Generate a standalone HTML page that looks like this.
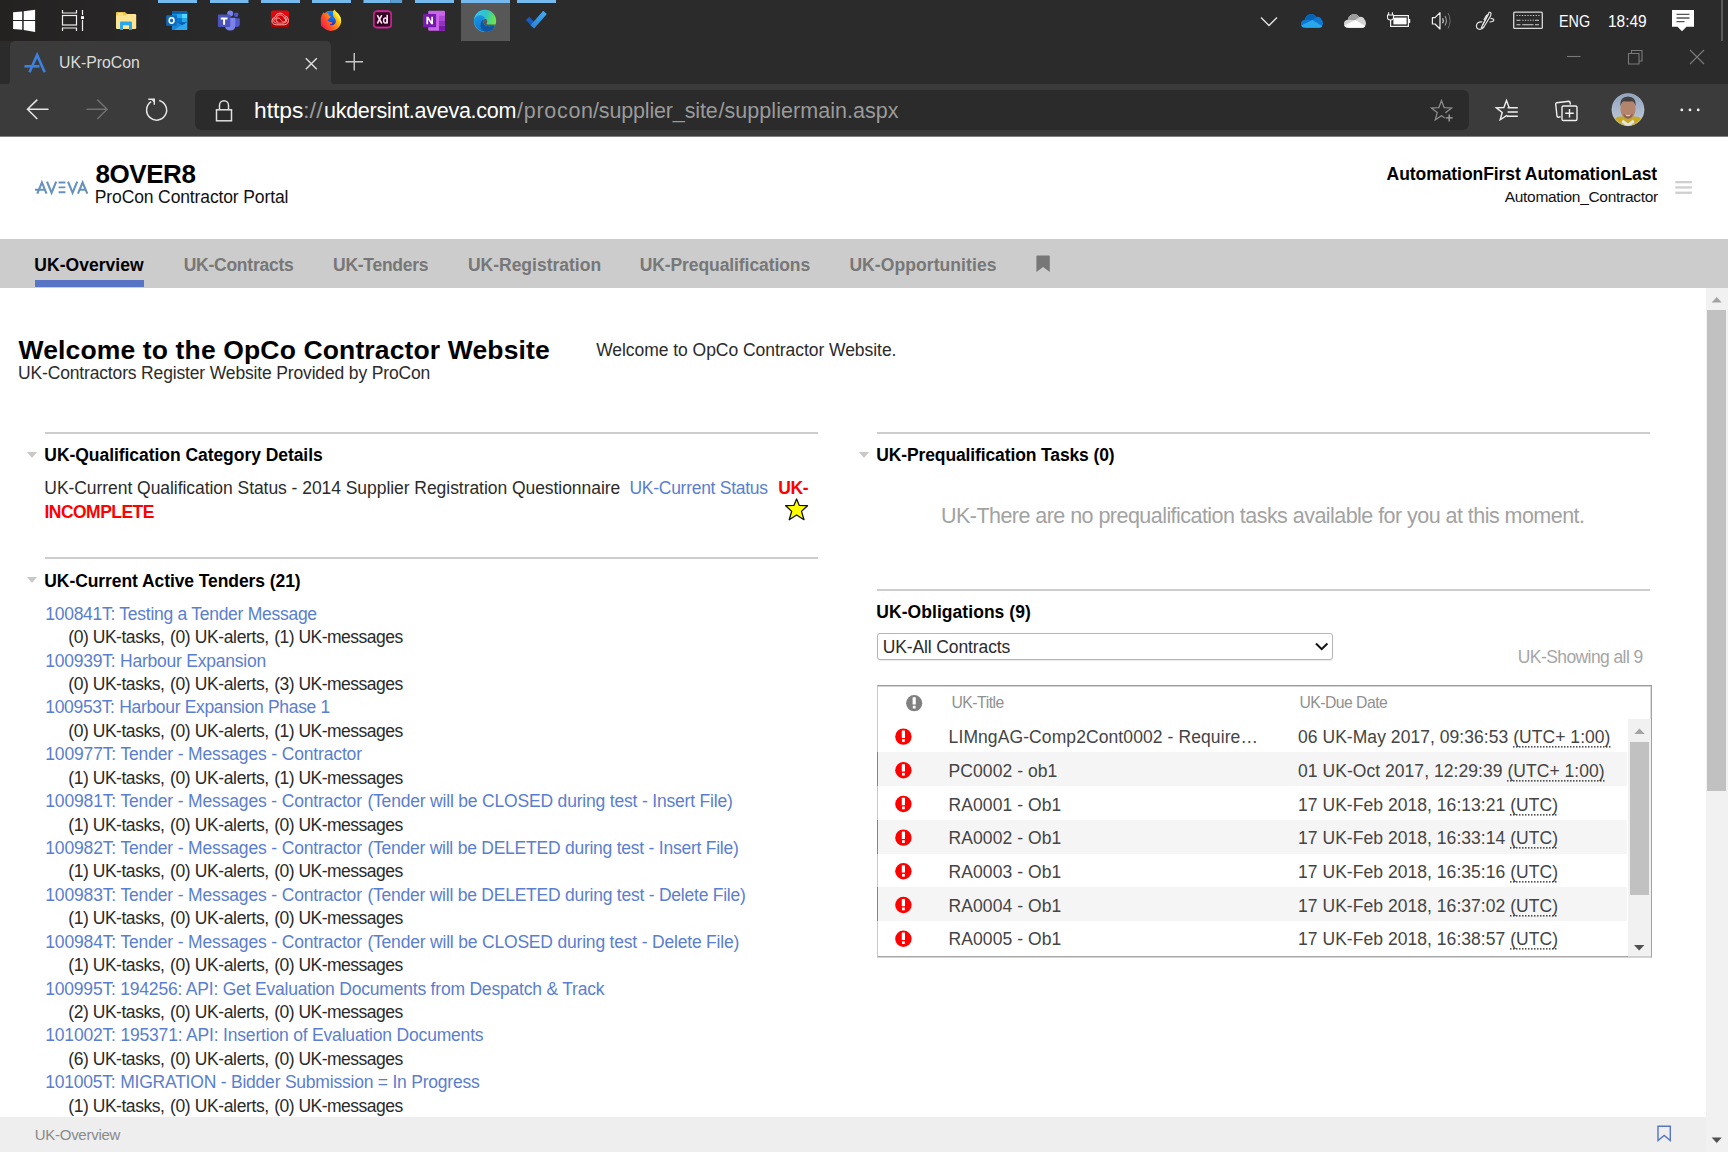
<!DOCTYPE html>
<html>
<head>
<meta charset="utf-8">
<title>UK-ProCon</title>
<style>
*{box-sizing:border-box;margin:0;padding:0}
html,body{width:1728px;height:1152px;overflow:hidden;background:#fff}
body{font-family:"Liberation Sans",sans-serif;position:relative;color:#000;font-size:16px;line-height:1}
.a{position:absolute;display:block}
.t{position:absolute;white-space:pre;line-height:1;font-family:"Liberation Sans",sans-serif}
svg{position:absolute;display:block;overflow:visible}
.ab{}
/* chrome */
#taskbar{left:0;top:0;width:1728px;height:41px;background:linear-gradient(90deg,#242121 0,#292828 160px,#2b2b2b 400px)}
#tabstrip{left:0;top:41px;width:1728px;height:44px;background:#2b2b2b}
#tab{left:10px;top:41px;width:321px;height:44px;background:#3b3b3b;border-radius:5px 5px 0 0}
#addr{left:0;top:84px;width:1728px;height:52px;background:#3b3b3b}
#url{left:195px;top:90px;width:1274px;height:40px;background:#2b2b2b;border-radius:6px}
#chromeline{left:0;top:136px;width:1728px;height:1px;background:#808080}
.ind{position:absolute;top:0;height:3px;background:#76b9ed}
/* page */
#nav{left:0;top:239px;width:1728px;height:49px;background:#cccccc}
#navbar{left:35px;top:280px;width:109px;height:7px;background:#5775c4}
#footer{left:0;top:1117px;width:1706px;height:35px;background:#eeeeee}
#vscroll{left:1706px;top:288px;width:22px;height:864px;background:#f1f1f1}
#vthumb{left:1707px;top:310px;width:19px;height:481px;background:#c1c1c1}
.hr{position:absolute;height:2px;background:#cdcdcd}
.tri{position:absolute;width:0;height:0;border-left:5.5px solid transparent;border-right:5.5px solid transparent;border-top:6px solid #c8c8c8}
#sel{left:877px;top:633px;width:456px;height:27px;border:1px solid #b5b5b5;border-radius:3px;background:#fff;box-shadow:0 1px 1px rgba(0,0,0,.08)}
#tbl{left:877px;top:685px;width:775px;height:273px;background:#fff;border-top:1px solid #9c9c9c;border-left:1px solid #c8c8c8;border-right:1px solid #a2a2a2;border-bottom:1px solid #d4d4d4;box-shadow:inset 0 1px 0 #d2d2d2,inset -1px 0 0 #dcdcdc,inset 0 -1px 0 #a8a8a8}
.alt{position:absolute;left:877px;width:750px;height:33.7px;background:#f5f5f5;border-left:1px solid #858585}
#iscroll{left:1628px;top:719px;width:23px;height:238px;background:#f1f1f1;border-bottom:1px solid #cfcfcf}
#ithumb{left:1630px;top:742px;width:19px;height:153px;background:#c1c1c1}
</style>
</head>
<body>
<!-- ======== TASKBAR / BROWSER CHROME ======== -->
<div class="a" id="taskbar"></div>
<div class="a" id="tabstrip"></div>
<div class="a" id="tab"></div>
<div class="a" id="addr"></div>
<div class="a" id="url"></div>
<div class="a" id="chromeline"></div>
<svg class="a" style="left:0;top:0" width="1728" height="137" viewBox="0 0 1728 137">
<defs>
<linearGradient id="gcc" x1="0" y1="0" x2="0" y2="1"><stop offset="0" stop-color="#f0070e"/><stop offset="1" stop-color="#a80000"/></linearGradient>
<linearGradient id="gff" gradientUnits="userSpaceOnUse" x1="341" y1="14" x2="321" y2="27"><stop offset="0" stop-color="#fff36a"/><stop offset="0.15" stop-color="#ffee3a"/><stop offset="0.27" stop-color="#ffbd0a"/><stop offset="0.45" stop-color="#ff8a16"/><stop offset="0.7" stop-color="#ff4a2a"/><stop offset="0.88" stop-color="#ff2a3a"/><stop offset="1" stop-color="#d3108c"/></linearGradient>
<linearGradient id="gffb" x1="0.5" y1="0" x2="0.45" y2="1"><stop offset="0" stop-color="#0a84ff"/><stop offset="0.55" stop-color="#0a6cf0"/><stop offset="1" stop-color="#3a22b0"/></linearGradient>
<linearGradient id="gedge1" x1="0" y1="0.25" x2="1" y2="0.55"><stop offset="0" stop-color="#38c2fa"/><stop offset="0.5" stop-color="#2fc4c4"/><stop offset="0.85" stop-color="#62e05a"/><stop offset="1" stop-color="#6ee84a"/></linearGradient>
<linearGradient id="gedge2" x1="0.2" y1="0" x2="0.5" y2="1"><stop offset="0" stop-color="#1a96e2"/><stop offset="1" stop-color="#0a72d2"/></linearGradient>
<linearGradient id="gtodo" x1="0" y1="1" x2="1" y2="0"><stop offset="0" stop-color="#2a86d8"/><stop offset="1" stop-color="#43a8ef"/></linearGradient>
<clipPath id="cav"><circle cx="1628" cy="109.6" r="16.2"/></clipPath>
<linearGradient id="gsky" x1="0" y1="0" x2="0" y2="1"><stop offset="0" stop-color="#8fa3bf"/><stop offset="1" stop-color="#c4cdd9"/></linearGradient>
</defs>
<!-- indicator bars -->
<g fill="#76b9ed">
<rect x="158" y="0" width="39" height="3"/><rect x="210" y="0" width="38.5" height="3"/><rect x="261" y="0" width="39" height="3"/>
<rect x="312" y="0" width="39" height="3"/><rect x="363.5" y="0" width="27" height="3"/><rect x="390.5" y="0" width="11.6" height="3" fill="#5a9bd0"/>
<rect x="415" y="0" width="39" height="3"/><rect x="461" y="0" width="49" height="3"/><rect x="517" y="0" width="39" height="3"/>
</g>
<rect x="461" y="3" width="49" height="38" fill="#575757"/>
<!-- windows logo -->
<g fill="#fff">
<polygon points="13.1,12.3 22.2,11.5 22.2,20 13.1,20"/><polygon points="23.7,11.3 35.1,9.7 35.1,20 23.7,20"/>
<polygon points="13.1,21 22.2,21 22.2,29.7 13.1,28.9"/><polygon points="23.7,21 35.1,21 35.1,32 23.7,30.1"/>
</g>
<!-- task view -->
<g fill="none" stroke="#f0f0f0" stroke-width="1.2">
<rect x="62.5" y="15.5" width="14" height="9.5"/>
<path d="M62.5 10v3h14v-3M62.5 31v-3h14v3M82.5 10v5M82.5 20v11"/>
</g>
<rect x="81" y="16.2" width="3" height="2.8" fill="#fff"/>
<!-- folder -->
<path d="M116 13.3q0-1 1-1h7.3q1 0 1.7 1l1 0.8h8.2q1 0 1 1v13q0 1-1 1h-18.2q-1 0-1-1z" fill="#ffe591"/>
<path d="M116 13.3q0-1 1-1h7.3q1 0 1.7 1l0.7 0.8-1.2 1.2h-9.5z" fill="#f5c638"/>
<rect x="118" y="13.3" width="5" height="1.3" rx="0.6" fill="#fff7d6"/>
<path d="M120 30v-7.4q0-1 1-1h10q1 0 1 1v7.4h-3v-4.7h-6v4.7z" fill="#29a9ea"/>
<!-- outlook -->
<rect x="172" y="11.3" width="15.2" height="18.7" rx="1" fill="#1490df"/>
<rect x="172" y="11.3" width="15.2" height="2.6" fill="#0a5ead"/>
<rect x="177" y="13.9" width="5.1" height="4.2" fill="#28a8ea"/><rect x="182.1" y="13.9" width="5.1" height="4.2" fill="#50d9ff"/>
<rect x="177" y="18.1" width="5.1" height="4.2" fill="#0078d4"/><rect x="182.1" y="18.1" width="5.1" height="4.2" fill="#28a8ea"/>
<path d="M172 22l15.2 8h-15.2z" fill="#1a86d9"/><path d="M187.2 21.5l-13 8.5h13z" fill="#32a9ee"/>
<path d="M177 22.3h10.2l-5.1 3z" fill="#0a5ead"/>
<rect x="166.2" y="15.3" width="10.7" height="10.4" rx="0.8" fill="#0f6cbd"/>
<ellipse cx="171.6" cy="20.5" rx="2.4" ry="2.7" fill="none" stroke="#fff" stroke-width="1.5"/>
<!-- teams -->
<circle cx="236.2" cy="14.8" r="2.3" fill="#5059c9"/>
<path d="M233 18.2h6.2q0.6 0 0.6 0.6v5.2q0 3-3.2 3t-3.6-3z" fill="#5059c9"/>
<circle cx="230.2" cy="13.5" r="3" fill="#7b83eb"/>
<path d="M225.5 17.8h9.2q0.6 0 0.6 0.6v7.2q0 5-5 5t-5.4-5z" fill="#7b83eb"/>
<rect x="217.9" y="14.5" width="12.4" height="12.4" rx="0.8" fill="#4b53bc"/>
<path d="M220.7 17.6h6.8v1.9h-2.4v5.3h-2v-5.3h-2.4z" fill="#fff"/>
<!-- creative cloud -->
<rect x="270.900" y="10.600" width="18.100" height="16.900" rx="2.600" fill="url(#gcc)"/>
<g fill="none" stroke="#ffc4c4" stroke-width="0.900">
<path d="M276.200 24.800q-4.200-.3-4.200-3.900 0-3 3-3.800 1-4 5.200-4 3 0 4.400 2.600 3.800 .600 3.800 4.500 0 4.200-4.200 4.600z"/>
<path d="M276.600 23.100q-2.900-.2-2.900-2.500 0-2.200 2.600-2.700 .800-3.100 3.900-3.100 2.300 0 3.300 2.100 3.200 .300 3.200 3.100 0 2.900-3 3.100z" opacity=".85"/>
<path d="M278.200 22q-2.200 0-2.200-2t2.200-2q1.200 0 2 1l1.600 2q.9 1 1.900 1 2 0 2-2t-2-2" opacity=".9"/>
</g>
<!-- firefox -->
<circle cx="331" cy="20.900" r="10.100" fill="url(#gff)"/>
<circle cx="331.200" cy="18.200" r="7.300" fill="url(#gffb)"/>
<path d="M333 11.600L334.400 9.600C335.500 11.800 337.800 12.600 339.300 15.200C341 18 341.500 20.500 341 23L336 28L332 25.600C334 25.200 336 23.500 335.900 21C335.800 18.500 333.300 17.500 333 15Z" fill="url(#gff)"/>
<path d="M323.600 12.200C324.300 13 325 13.800 325.600 13.700C326.500 13.400 327.500 13.200 328.600 13.400C328.400 14.500 328.800 15.300 329.400 15.700L330.800 16.600C330.300 17.600 329.600 18.200 328.800 18.800C328.200 19.600 327.800 20.200 327.400 20.600C328.800 21.800 330.800 22.300 332.600 22.600C332 23.800 330.800 24.400 329.400 24.600C330.500 25.300 331.500 25.500 332.500 25.500L331 31L321 26L320.800 20C320.800 17 321.800 14.300 323.600 12.200Z" fill="url(#gff)"/>
<!-- Xd -->
<rect x="373.900" y="11.400" width="17.200" height="15.900" rx="2.600" fill="#2e001e" stroke="#c4208f" stroke-width="1.800"/>
<path d="M376.500 10.900h12M376.500 27.800h12" stroke="#ee2cb4" stroke-width="0.900" fill="none"/>
<g fill="none" stroke="#ffdcf3" stroke-width="1.600">
<path d="M377.300 15.200l4.500 8.300M381.800 15.200l-4.500 8.300"/>
<path d="M387.200 14.800v8.700"/>
<ellipse cx="385.400" cy="20.500" rx="1.800" ry="2.500" stroke-width="1.400"/>
</g>
<!-- onenote -->
<rect x="428.200" y="10.800" width="16.800" height="19.900" rx="1" fill="#ca64ea"/>
<rect x="439" y="15.700" width="6" height="5" fill="#ae4bd5"/><rect x="439" y="20.700" width="6" height="5" fill="#9332bf"/><path d="M439 25.700h6v4q0 1-1 1h-5z" fill="#7719aa"/>
<rect x="423" y="14" width="13.100" height="13.200" rx="0.800" fill="#7719aa"/>
<path d="M426.400 24.200v-7.400h1.900l3 4.600v-4.600h1.700v7.400h-1.800l-3.100-4.700v4.700z" fill="#fff"/>
<!-- edge -->
<circle cx="485" cy="20.900" r="11.100" fill="url(#gedge1)"/>
<path d="M474.050 19.500C475.300 16.200 478.300 14.900 481 15.200C483 15.500 484.500 17 485 18.600C483.600 18.800 483.100 20 483.200 21.500C483.200 23 483.800 24.200 485.200 25.200C487.500 26.600 491 26.600 495 25.600A11.100 11.100 0 0 1 474.050 19.500Z" fill="url(#gedge2)"/>
<path d="M483.500 19.300C481.500 20.500 480.200 23 480.500 26C481 29.500 483.500 31.800 487 31.900C491 31.500 494 29 495 25.600C491 26.600 487.500 26.600 485.200 25.200C483.800 24.200 483.200 23 483.200 21.500C483.100 20.500 483.200 19.800 483.500 19.300Z" fill="#0e56a4"/>
<ellipse cx="485.150" cy="21.600" rx="1.950" ry="2.750" fill="#575757"/>
<path d="M484.300 23.500L488 24.400L495.700 24.400L495.800 25.300L495 25.600C491 26.600 487.500 26.600 485.200 25.200Z" fill="#575757"/>
<!-- todo -->
<path d="M527.600 18.400l6.400 6.700" stroke="#195abd" stroke-width="4.800" fill="none"/>
<path d="M532.300 26.800l12.700-14.500" stroke="url(#gtodo)" stroke-width="4.800" fill="none"/>
<!-- tray chevron -->
<path d="M1261 17.500l8 8 8-8" fill="none" stroke="#e6e6e6" stroke-width="1.300"/>
<!-- onedrive blue -->
<path d="M1305.500 27.700q-4.500 0-4.500-4 0-3.500 3.800-4 .7-4.200 5-5.500 4-1 6.700 2.700 4-.5 5.200 3 .8 0 1 1.800 1.200 2.500-1 5-1 1-2.500 1z" fill="#0f78d4"/>
<path d="M1304.800 19.700q.7-4.200 5-5.500 4-1 6.700 2.700l-4.500 3.300z" fill="#0364b8"/>
<path d="M1301.300 25.500l11-5.500 10 6q-.8 1.700-2.800 1.700h-14q-3.500 0-4.200-2.200z" fill="#28a8ea"/>
<!-- onedrive gray -->
<path d="M1348.500 27.700q-4.500 0-4.500-4 0-3.500 3.800-4 .7-4.200 5-5.500 4-1 6.700 2.700 4-.5 5.200 3 .8 0 1 1.800 1.200 2.500-1 5-1 1-2.500 1z" fill="#d4d4d4"/>
<path d="M1347.800 19.700q.7-4.200 5-5.500 4-1 6.700 2.700l-4.500 3.300z" fill="#9c9c9c"/>
<path d="M1344.300 25.500l11-5.500 10 6q-.8 1.700-2.800 1.700h-14q-3.500 0-4.200-2.200z" fill="#fbfbfb"/>
<!-- battery -->
<rect x="1390.600" y="15.600" width="17.800" height="10.800" fill="none" stroke="#f2f2f2" stroke-width="1.200"/>
<rect x="1393.400" y="17.600" width="13.200" height="6.800" fill="#fff"/>
<rect x="1409" y="19" width="1.200" height="4" fill="#f2f2f2"/>
<path d="M1388.600 12.300v2.700M1392.400 12.300v2.700M1387.500 15h6v2.500q0 2.500-3 2.500t-3-2.500zM1390.500 20v2.200" fill="#2b2b2b" stroke="#f2f2f2" stroke-width="1.100"/>
<!-- speaker -->
<path d="M1432.400 17.700h2.600l5-5v16.300l-5-5h-2.600z" fill="none" stroke="#f2f2f2" stroke-width="1.200" stroke-linejoin="round"/>
<path d="M1442.600 18.300q1.400 2.500 0 5" fill="none" stroke="#d8d8d8" stroke-width="1.200"/>
<path d="M1445 16q2.700 4.800 0 9.600" fill="none" stroke="#a0a0a0" stroke-width="1.100"/>
<path d="M1448 13q4.200 7.800 0 15.600" fill="none" stroke="#6c6c6c" stroke-width="1"/>
<!-- pen -->
<g fill="none" stroke="#e4e4e4" stroke-width="1.200">
<path d="M1489.200 12.300q1.600-.4 1.900 1.500l-.6 2.200-6.800 11.200q-1.500 1.600-2.300.2z"/>
<path d="M1486.800 14.800l-3 5.200M1488.500 14l-5.800 11"/>
<path d="M1482.300 21.800q-5.300-.3-5.900 3.800-.1 3.600 3.500 3.700 2.800-.3 4-2.500M1489.500 22q4.500-.3 4.300-2.200-.5-1.500-3.300-1.500"/>
</g>
<!-- keyboard -->
<rect x="1513.700" y="12.200" width="28.600" height="16.200" rx="1" fill="none" stroke="#dadada" stroke-width="1.300"/>
<g stroke="#d4d4d4" stroke-width="1.100" fill="none">
<path d="M1516.500 15.500h23" stroke-dasharray="1.200 1.530"/>
<path d="M1516.500 20.300h4M1535 20.300h4M1516.500 24.700h4M1522.200 24.700h11.300M1535 24.700h4"/>
<path d="M1522.300 20.300h11.500" stroke-dasharray="1.200 1.400"/>
</g>
<!-- notification -->
<path d="M1672 10h22v16.700h-7.500l-4.500 4.600-4.500-4.600h-5.500z" fill="#fff"/>
<path d="M1676.500 14.300h13M1676.500 18h13M1676.500 21.700h8" stroke="#555" stroke-width="1.300"/>
<rect x="1721.500" y="0" width="1" height="41" fill="#8a8a8a"/>
<!-- window controls -->
<g stroke="#7a7a7a" stroke-width="1.100" fill="none">
<path d="M1567 56.500h13.500"/>
<path d="M1628.500 53.500h10.500v10.500h-10.500zM1631.500 53.500v-3h10.500v10.500h-3"/>
<path d="M1690 50l14 14M1704 50l-14 14"/>
</g>
<path d="M5.500 84.500Q10 84.500 10 80V84.500ZM331 80Q331 84.500 335.500 84.500H331Z" fill="#3b3b3b"/>
<!-- tab favicon -->
<g fill="none" stroke="#3b82e0" stroke-width="2.600">
<path d="M29.500 72.300l7.600-17.400 7.600 17.400"/><path d="M24.500 66.300h15"/>
</g>
<!-- tab close / new tab -->
<path d="M305.800 58.300l11 11M316.800 58.300l-11 11" stroke="#e0e0e0" stroke-width="1.400" fill="none"/>
<path d="M345.500 61.800h17.500M354.250 53v17.500" stroke="#c8c8c8" stroke-width="1.400" fill="none"/>
<!-- back / fwd / reload -->
<g fill="none" stroke="#e6e6e6" stroke-width="1.500">
<path d="M48.500 109.300h-21M37.300 99.600l-9.800 9.700 9.800 9.700"/>
</g>
<g fill="none" stroke="#707070" stroke-width="1.500">
<path d="M86.500 109.300h20.500M97.300 99.600l9.800 9.700-9.800 9.700"/>
</g>
<g fill="none" stroke="#e6e6e6" stroke-width="1.500">
<path d="M159.200 100.450a10 10 0 1 1-8 1.250"/>
<path d="M148.300 99.300h6v5.500" stroke-width="1.400"/>
<path d="M150.800 99.300h3.500v3.500z" fill="#e6e6e6" stroke="none"/>
</g>
<!-- lock -->
<g fill="none" stroke="#e0e0e0" stroke-width="1.500">
<rect x="216.500" y="109.800" width="15" height="11"/>
<path d="M219.500 109.800v-4.500a4.500 4.500 0 0 1 9 0v4.500"/>
</g>
<!-- fav star+ -->
<path d="M1441.50 100.60L1444.15 107.56L1451.58 107.92L1445.78 112.59L1447.73 119.78L1441.50 115.70L1435.27 119.78L1437.22 112.59L1431.42 107.92L1438.85 107.56Z" fill="none" stroke="#8f8f8f" stroke-width="1.250"/>
<rect x="1444.600" y="113.200" width="9" height="9" fill="#2b2b2b"/>
<path d="M1449.200 114.400v7M1445.700 117.900h7" stroke="#a8a8a8" stroke-width="1.300" fill="none"/>
<!-- favourites list -->
<g fill="none" stroke="#f0f0f0" stroke-width="1.400">
<path d="M1509.15 107.46L1506.50 100.40L1503.85 107.46L1496.32 107.79L1502.22 112.49L1500.21 119.76L1506.50 115.60l1.600 1"/>
<path d="M1507.600 107.800h10.200M1507.600 112h10.200M1507.600 116.200h10.200"/>
</g>
<!-- collections -->
<g fill="none" stroke="#f0f0f0" stroke-width="1.400">
<path d="M1560.600 116.800l-2.400.4q-1 0-1.200-1l-1.300-12.200q0-1 1-1.200l12.200-1.500q1 0 1.200 1l.3 2.300"/>
<rect x="1562" y="106" width="15" height="14.500" rx="1.300"/>
<path d="M1569.500 109v8.500M1565.200 113.250h8.600"/>
</g>
<!-- avatar -->
<g clip-path="url(#cav)">
<rect x="1611" y="93" width="34" height="34" fill="url(#gsky)"/>
<path d="M1611 127v-5q4-5 9-5.500l16 0q5 .5 9 5.500v5z" fill="#c7aa22"/>
<path d="M1623 119.500l5 4 5-4 1.500 3-6.500 4.500-6.500-4.500z" fill="#e4e4e4"/>
<ellipse cx="1628" cy="109" rx="7.600" ry="10.200" fill="#b4856c"/>
<path d="M1620.300 106.500q-.8-9.800 7.700-10 8.500.2 7.700 10-1.200-4.600-3.500-5.300-4.200.8-8.400 0-2.300.7-3.500 5.300z" fill="#45413e"/>
<path d="M1623 113.500q5 3.500 10 0-1 5-5 5.200-4-.2-5-5.200z" fill="#8f6350"/>
<path d="M1625 114.500q3 1.600 6 0-1 1.800-3 1.800t-3-1.800z" fill="#efe6df"/>
</g>
<circle cx="1628" cy="109.600" r="16.200" fill="none" stroke="#d8dde6" stroke-width="0.600" opacity=".6"/>
<!-- dots -->
<g fill="#f0f0f0"><circle cx="1681.800" cy="109.900" r="1.400"/><circle cx="1690" cy="109.900" r="1.400"/><circle cx="1698.200" cy="109.900" r="1.400"/></g>
</svg>

<div class="t" style="left:58.57px;top:54px;font-size:17px;color:#dcdcdc;transform:scaleX(0.9302);transform-origin:0 0;">UK-ProCon</div>
<div class="t" style="left:253.94px;top:101px;font-size:21.5px;color:#ffffff;transform:scaleX(1.0588);transform-origin:0 0;">https</div>
<div class="t" style="left:302.64px;top:101px;font-size:21.5px;color:#9a9a9a;transform:scaleX(1.1064);transform-origin:0 0;">://</div>
<div class="t" style="left:324.00px;top:101px;font-size:21.5px;color:#ffffff;letter-spacing:-0.265px;">ukdersint.aveva.com</div>
<div class="t" style="left:517.00px;top:101px;font-size:21.5px;color:#9a9a9a;letter-spacing:0.724px;">/procon</div>
<div class="t" style="left:593.00px;top:101px;font-size:21.5px;color:#9a9a9a;letter-spacing:-0.156px;">/supplier_site</div>
<div class="t" style="left:718.50px;top:101px;font-size:21.5px;color:#9a9a9a;letter-spacing:0.047px;">/suppliermain.aspx</div>
<div class="t" style="left:1558.50px;top:14px;font-size:16px;color:#ffffff;transform:scaleX(0.8969);transform-origin:0 0;">ENG</div>
<div class="t" style="left:1607.63px;top:14px;font-size:16px;color:#ffffff;transform:scaleX(0.9657);transform-origin:0 0;">18:49</div>

<!-- ======== PAGE HEADER ======== -->
<!--{{LOGO}}-->
<div class="a" id="nav"></div>
<div class="a" id="navbar"></div>

<!-- ======== CONTENT ======== -->
<div class="hr" style="left:45px;top:432px;width:773px"></div>
<div class="hr" style="left:45px;top:557px;width:773px"></div>
<div class="hr" style="left:877px;top:432px;width:773px"></div>
<div class="hr" style="left:877px;top:589px;width:773px"></div>
<div class="tri" style="left:27px;top:451.5px"></div>
<div class="tri" style="left:27px;top:577px"></div>
<div class="tri" style="left:859px;top:451.5px"></div>
<div class="a" id="sel"></div>
<div class="a" id="tbl"></div>
<div class="alt" style="top:752px;height:34px"></div>
<div class="alt" style="top:820px;height:34px"></div>
<div class="alt" style="top:887px;height:34px"></div>
<div class="a" id="iscroll"></div>
<div class="a" id="ithumb"></div>
<div class="t" style="left:95.40px;top:161px;font-size:26px;color:#000;font-weight:bold;letter-spacing:-0.429px;">8OVER8</div>
<div class="t" style="left:94.80px;top:189px;font-size:17.5px;color:#111;letter-spacing:-0.125px;">ProCon Contractor Portal</div>
<div class="t" style="left:1386.60px;top:166px;font-size:17.5px;color:#000;font-weight:bold;letter-spacing:-0.067px;">AutomationFirst AutomationLast</div>
<div class="t" style="left:1504.70px;top:189px;font-size:15.5px;color:#111;letter-spacing:-0.296px;">Automation_Contractor</div>
<div class="t" style="left:34.30px;top:257px;font-size:17.5px;color:#000;font-weight:bold;letter-spacing:0.038px;">UK-Overview</div>
<div class="t" style="left:183.70px;top:257px;font-size:17.5px;color:#777;font-weight:bold;letter-spacing:-0.250px;">UK-Contracts</div>
<div class="t" style="left:333.00px;top:257px;font-size:17.5px;color:#777;font-weight:bold;letter-spacing:-0.261px;">UK-Tenders</div>
<div class="t" style="left:467.90px;top:257px;font-size:17.5px;color:#777;font-weight:bold;">UK-Registration</div>
<div class="t" style="left:639.70px;top:257px;font-size:17.5px;color:#777;font-weight:bold;letter-spacing:-0.088px;">UK-Prequalifications</div>
<div class="t" style="left:849.40px;top:257px;font-size:17.5px;color:#777;font-weight:bold;letter-spacing:0.081px;">UK-Opportunities</div>
<div class="t" style="left:18.50px;top:337px;font-size:26.5px;color:#000;font-weight:bold;letter-spacing:0.138px;">Welcome to the OpCo Contractor Website</div>
<div class="t" style="left:18.00px;top:365px;font-size:17.5px;color:#2b2b2b;letter-spacing:-0.155px;">UK-Contractors Register Website Provided by ProCon</div>
<div class="t" style="left:596.20px;top:342px;font-size:17.5px;color:#2b2b2b;letter-spacing:-0.046px;">Welcome to OpCo Contractor Website.</div>
<div class="t" style="left:44.30px;top:447px;font-size:17.5px;color:#000;font-weight:bold;letter-spacing:-0.051px;">UK-Qualification Category Details</div>
<div class="t" style="left:44.30px;top:480px;font-size:17.5px;color:#2b2b2b;letter-spacing:-0.052px;">UK-Current Qualification Status - 2014 Supplier Registration Questionnaire</div>
<div class="t" style="left:629.50px;top:480px;font-size:17.5px;color:#5a7ecf;letter-spacing:-0.279px;">UK-Current Status</div>
<div class="t" style="left:778.25px;top:480px;font-size:17.5px;color:#ff0000;font-weight:bold;letter-spacing:-0.388px;">UK-</div>
<div class="t" style="left:44.50px;top:504px;font-size:17.5px;color:#ff0000;font-weight:bold;letter-spacing:-0.534px;">INCOMPLETE</div>
<div class="t" style="left:44.30px;top:573px;font-size:17.5px;color:#000;font-weight:bold;letter-spacing:-0.079px;">UK-Current Active Tenders (21)</div>
<div class="t" style="left:876.30px;top:447px;font-size:17.5px;color:#000;font-weight:bold;letter-spacing:-0.126px;">UK-Prequalification Tasks (0)</div>
<div class="t" style="left:941.00px;top:506px;font-size:21.5px;color:#a2a2a2;letter-spacing:-0.541px;">UK-There are no prequalification tasks available for you at this moment.</div>
<div class="t" style="left:876.30px;top:604px;font-size:17.5px;color:#000;font-weight:bold;letter-spacing:0.054px;">UK-Obligations (9)</div>
<div class="t" style="left:882.75px;top:639px;font-size:17.5px;color:#2b2b2b;letter-spacing:-0.122px;">UK-All Contracts</div>
<div class="t" style="left:1517.75px;top:649px;font-size:17.5px;color:#a6a6a6;letter-spacing:-0.583px;">UK-Showing all 9</div>
<div class="t" style="left:951.50px;top:695px;font-size:15.75px;color:#909090;letter-spacing:-0.505px;">UK-Title</div>
<div class="t" style="left:1299.50px;top:695px;font-size:15.75px;color:#909090;letter-spacing:-0.540px;">UK-Due Date</div>
<div class="t" style="left:45.25px;top:606px;font-size:17.5px;color:#5a7ecf;letter-spacing:-0.271px;">100841T: Testing a Tender Message</div>
<div class="t" style="left:68.30px;top:629px;font-size:17.5px;color:#2a2a2a;letter-spacing:-0.461px;">(0) UK-tasks,</div>
<div class="t" style="left:170.00px;top:629px;font-size:17.5px;color:#2a2a2a;letter-spacing:-0.375px;">(0) UK-alerts,</div>
<div class="t" style="left:274.20px;top:629px;font-size:17.5px;color:#2a2a2a;letter-spacing:-0.507px;">(1) UK-messages</div>
<div class="t" style="left:45.25px;top:653px;font-size:17.5px;color:#5a7ecf;letter-spacing:-0.228px;">100939T: Harbour Expansion</div>
<div class="t" style="left:68.30px;top:676px;font-size:17.5px;color:#2a2a2a;letter-spacing:-0.461px;">(0) UK-tasks,</div>
<div class="t" style="left:170.00px;top:676px;font-size:17.5px;color:#2a2a2a;letter-spacing:-0.375px;">(0) UK-alerts,</div>
<div class="t" style="left:274.20px;top:676px;font-size:17.5px;color:#2a2a2a;letter-spacing:-0.507px;">(3) UK-messages</div>
<div class="t" style="left:45.25px;top:699px;font-size:17.5px;color:#5a7ecf;letter-spacing:-0.326px;">100953T: Harbour Expansion Phase 1</div>
<div class="t" style="left:68.30px;top:723px;font-size:17.5px;color:#2a2a2a;letter-spacing:-0.461px;">(0) UK-tasks,</div>
<div class="t" style="left:170.00px;top:723px;font-size:17.5px;color:#2a2a2a;letter-spacing:-0.375px;">(0) UK-alerts,</div>
<div class="t" style="left:274.20px;top:723px;font-size:17.5px;color:#2a2a2a;letter-spacing:-0.507px;">(1) UK-messages</div>
<div class="t" style="left:45.25px;top:746px;font-size:17.5px;color:#5a7ecf;letter-spacing:-0.154px;">100977T: Tender - Messages - Contractor</div>
<div class="t" style="left:68.30px;top:770px;font-size:17.5px;color:#2a2a2a;letter-spacing:-0.461px;">(1) UK-tasks,</div>
<div class="t" style="left:170.00px;top:770px;font-size:17.5px;color:#2a2a2a;letter-spacing:-0.375px;">(0) UK-alerts,</div>
<div class="t" style="left:274.20px;top:770px;font-size:17.5px;color:#2a2a2a;letter-spacing:-0.507px;">(1) UK-messages</div>
<div class="t" style="left:45.25px;top:793px;font-size:17.5px;color:#5a7ecf;letter-spacing:-0.154px;">100981T: Tender - Messages - Contractor</div>
<div class="t" style="left:367.40px;top:793px;font-size:17.5px;color:#5a7ecf;letter-spacing:-0.188px;">(Tender will be CLOSED during test - Insert File)</div>
<div class="t" style="left:68.30px;top:817px;font-size:17.5px;color:#2a2a2a;letter-spacing:-0.461px;">(1) UK-tasks,</div>
<div class="t" style="left:170.00px;top:817px;font-size:17.5px;color:#2a2a2a;letter-spacing:-0.375px;">(0) UK-alerts,</div>
<div class="t" style="left:274.20px;top:817px;font-size:17.5px;color:#2a2a2a;letter-spacing:-0.507px;">(0) UK-messages</div>
<div class="t" style="left:45.25px;top:840px;font-size:17.5px;color:#5a7ecf;letter-spacing:-0.154px;">100982T: Tender - Messages - Contractor</div>
<div class="t" style="left:367.40px;top:840px;font-size:17.5px;color:#5a7ecf;letter-spacing:-0.240px;">(Tender will be DELETED during test - Insert File)</div>
<div class="t" style="left:68.30px;top:863px;font-size:17.5px;color:#2a2a2a;letter-spacing:-0.461px;">(1) UK-tasks,</div>
<div class="t" style="left:170.00px;top:863px;font-size:17.5px;color:#2a2a2a;letter-spacing:-0.375px;">(0) UK-alerts,</div>
<div class="t" style="left:274.20px;top:863px;font-size:17.5px;color:#2a2a2a;letter-spacing:-0.507px;">(0) UK-messages</div>
<div class="t" style="left:45.25px;top:887px;font-size:17.5px;color:#5a7ecf;letter-spacing:-0.154px;">100983T: Tender - Messages - Contractor</div>
<div class="t" style="left:367.40px;top:887px;font-size:17.5px;color:#5a7ecf;letter-spacing:-0.236px;">(Tender will be DELETED during test - Delete File)</div>
<div class="t" style="left:68.30px;top:910px;font-size:17.5px;color:#2a2a2a;letter-spacing:-0.461px;">(1) UK-tasks,</div>
<div class="t" style="left:170.00px;top:910px;font-size:17.5px;color:#2a2a2a;letter-spacing:-0.375px;">(0) UK-alerts,</div>
<div class="t" style="left:274.20px;top:910px;font-size:17.5px;color:#2a2a2a;letter-spacing:-0.507px;">(0) UK-messages</div>
<div class="t" style="left:45.25px;top:934px;font-size:17.5px;color:#5a7ecf;letter-spacing:-0.154px;">100984T: Tender - Messages - Contractor</div>
<div class="t" style="left:367.40px;top:934px;font-size:17.5px;color:#5a7ecf;letter-spacing:-0.194px;">(Tender will be CLOSED during test - Delete File)</div>
<div class="t" style="left:68.30px;top:957px;font-size:17.5px;color:#2a2a2a;letter-spacing:-0.461px;">(1) UK-tasks,</div>
<div class="t" style="left:170.00px;top:957px;font-size:17.5px;color:#2a2a2a;letter-spacing:-0.375px;">(0) UK-alerts,</div>
<div class="t" style="left:274.20px;top:957px;font-size:17.5px;color:#2a2a2a;letter-spacing:-0.507px;">(0) UK-messages</div>
<div class="t" style="left:45.25px;top:981px;font-size:17.5px;color:#5a7ecf;letter-spacing:-0.205px;">100995T: 194256: API: Get Evaluation Documents from Despatch &amp; Track</div>
<div class="t" style="left:68.30px;top:1004px;font-size:17.5px;color:#2a2a2a;letter-spacing:-0.461px;">(2) UK-tasks,</div>
<div class="t" style="left:170.00px;top:1004px;font-size:17.5px;color:#2a2a2a;letter-spacing:-0.375px;">(0) UK-alerts,</div>
<div class="t" style="left:274.20px;top:1004px;font-size:17.5px;color:#2a2a2a;letter-spacing:-0.507px;">(0) UK-messages</div>
<div class="t" style="left:45.25px;top:1027px;font-size:17.5px;color:#5a7ecf;letter-spacing:-0.188px;">101002T: 195371: API: Insertion of Evaluation Documents</div>
<div class="t" style="left:68.30px;top:1051px;font-size:17.5px;color:#2a2a2a;letter-spacing:-0.461px;">(6) UK-tasks,</div>
<div class="t" style="left:170.00px;top:1051px;font-size:17.5px;color:#2a2a2a;letter-spacing:-0.375px;">(0) UK-alerts,</div>
<div class="t" style="left:274.20px;top:1051px;font-size:17.5px;color:#2a2a2a;letter-spacing:-0.507px;">(0) UK-messages</div>
<div class="t" style="left:45.25px;top:1074px;font-size:17.5px;color:#5a7ecf;letter-spacing:-0.218px;">101005T: MIGRATION - Bidder Submission = In Progress</div>
<div class="t" style="left:68.30px;top:1098px;font-size:17.5px;color:#2a2a2a;letter-spacing:-0.461px;">(1) UK-tasks,</div>
<div class="t" style="left:170.00px;top:1098px;font-size:17.5px;color:#2a2a2a;letter-spacing:-0.375px;">(0) UK-alerts,</div>
<div class="t" style="left:274.20px;top:1098px;font-size:17.5px;color:#2a2a2a;letter-spacing:-0.507px;">(0) UK-messages</div>
<div class="t" style="left:948.60px;top:729px;font-size:17.5px;color:#444;letter-spacing:0.094px;">LIMngAG-Comp2Cont0002 - Require…</div>
<div class="t" style="left:1298.00px;top:729px;font-size:17.5px;color:#444;letter-spacing:0.047px;">06 UK-May 2017, 09:36:53 <span class="ab">(UTC+ 1:00)</span></div>
<div class="t" style="left:948.60px;top:763px;font-size:17.5px;color:#444;letter-spacing:0.067px;">PC0002 - ob1</div>
<div class="t" style="left:1298.00px;top:763px;font-size:17.5px;color:#444;letter-spacing:0.048px;">01 UK-Oct 2017, 12:29:39 <span class="ab">(UTC+ 1:00)</span></div>
<div class="t" style="left:948.60px;top:797px;font-size:17.5px;color:#444;letter-spacing:0.078px;">RA0001 - Ob1</div>
<div class="t" style="left:1298.00px;top:797px;font-size:17.5px;color:#444;letter-spacing:0.044px;">17 UK-Feb 2018, 16:13:21 <span class="ab">(UTC)</span></div>
<div class="t" style="left:948.60px;top:830px;font-size:17.5px;color:#444;letter-spacing:0.078px;">RA0002 - Ob1</div>
<div class="t" style="left:1298.00px;top:830px;font-size:17.5px;color:#444;letter-spacing:0.044px;">17 UK-Feb 2018, 16:33:14 <span class="ab">(UTC)</span></div>
<div class="t" style="left:948.60px;top:864px;font-size:17.5px;color:#444;letter-spacing:0.078px;">RA0003 - Ob1</div>
<div class="t" style="left:1298.00px;top:864px;font-size:17.5px;color:#444;letter-spacing:0.044px;">17 UK-Feb 2018, 16:35:16 <span class="ab">(UTC)</span></div>
<div class="t" style="left:948.60px;top:898px;font-size:17.5px;color:#444;letter-spacing:0.078px;">RA0004 - Ob1</div>
<div class="t" style="left:1298.00px;top:898px;font-size:17.5px;color:#444;letter-spacing:0.044px;">17 UK-Feb 2018, 16:37:02 <span class="ab">(UTC)</span></div>
<div class="t" style="left:948.60px;top:931px;font-size:17.5px;color:#444;letter-spacing:0.078px;">RA0005 - Ob1</div>
<div class="t" style="left:1298.00px;top:931px;font-size:17.5px;color:#444;letter-spacing:0.044px;">17 UK-Feb 2018, 16:38:57 <span class="ab">(UTC)</span></div>
<svg class="a" style="left:0;top:137px" width="1706" height="980" viewBox="0 137 1706 980">
<!-- AVEVA logo -->
<g fill="none" stroke="#6591bd" stroke-width="2.100">
<path d="M37.300 193.600l4.600-11.200 4.600 11.200M35 189.800h9.800"/>
<path d="M47 181.600l4.600 11.200 4.600-11.200"/>
<path d="M58.600 182.500h6.800M58.600 187.400h6.800M58.600 192.300h6.800" stroke-width="1.900"/>
<path d="M68 181.600l4.600 11.200 4.600-11.200"/>
<path d="M78 193.600l4.600-11.200 4.700 11.200M79.800 189.800h5.800"/>
</g>
<!-- hamburger -->
<g fill="#cfcfcf"><rect x="1675.300" y="181" width="16.500" height="2.300"/><rect x="1675.300" y="186.300" width="16.500" height="2.300"/><rect x="1675.300" y="191.600" width="16.500" height="2.300"/></g>
<!-- nav bookmark -->
<path d="M1036.400 256.600q0-1 1-1h11.400q1 0 1 1v15.300l-6.700-5-6.700 5z" fill="#777"/>
<!-- star -->
<path d="M796.600 499l2.600 6.300 8.300.4-6 5.700 2.500 8.300-7.400-4.700-7.400 4.700 2.500-8.300-6-5.700 8.300-.4z" fill="#ffff00" stroke="#111" stroke-width="1.300" stroke-linejoin="round"/>
<!-- select chevron -->
<path d="M1316 643.500l5.700 5.700 5.700-5.700" fill="none" stroke="#111" stroke-width="2"/>
<!-- header icon -->
<circle cx="914.200" cy="703.200" r="8.100" fill="#808080"/>
<rect x="912.600" y="697.200" width="3.200" height="7.300" rx="0.500" fill="#fff"/><rect x="912.800" y="705.800" width="2.800" height="2.700" fill="#fff"/>
<!-- row icons -->
<circle cx="903.400" cy="736.60" r="8.200" fill="#ff0000"/><rect x="901.800" y="730.50" width="3.200" height="7.400" rx="0.500" fill="#fff"/><rect x="902" y="739.20" width="2.800" height="2.700" fill="#fff"/>
<circle cx="903.400" cy="770.28" r="8.200" fill="#ff0000"/><rect x="901.800" y="764.18" width="3.200" height="7.400" rx="0.500" fill="#fff"/><rect x="902" y="772.88" width="2.800" height="2.700" fill="#fff"/>
<circle cx="903.400" cy="803.96" r="8.200" fill="#ff0000"/><rect x="901.800" y="797.86" width="3.200" height="7.400" rx="0.500" fill="#fff"/><rect x="902" y="806.56" width="2.800" height="2.700" fill="#fff"/>
<circle cx="903.400" cy="837.64" r="8.200" fill="#ff0000"/><rect x="901.800" y="831.54" width="3.200" height="7.400" rx="0.500" fill="#fff"/><rect x="902" y="840.24" width="2.800" height="2.700" fill="#fff"/>
<circle cx="903.400" cy="871.32" r="8.200" fill="#ff0000"/><rect x="901.800" y="865.22" width="3.200" height="7.400" rx="0.500" fill="#fff"/><rect x="902" y="873.92" width="2.800" height="2.700" fill="#fff"/>
<circle cx="903.400" cy="905.00" r="8.200" fill="#ff0000"/><rect x="901.800" y="898.90" width="3.200" height="7.400" rx="0.500" fill="#fff"/><rect x="902" y="907.60" width="2.800" height="2.700" fill="#fff"/>
<circle cx="903.400" cy="938.68" r="8.200" fill="#ff0000"/><rect x="901.800" y="932.58" width="3.200" height="7.400" rx="0.500" fill="#fff"/><rect x="902" y="941.28" width="2.800" height="2.700" fill="#fff"/>
<g fill="none" stroke="#1c1c1c" stroke-width="1.4" stroke-dasharray="1.5 1.5"><path d="M1513 746.90H1610.48"/><path d="M1507 780.90H1604.69"/><path d="M1510 814.90H1558.08"/><path d="M1510 847.90H1558.08"/><path d="M1510 881.90H1558.08"/><path d="M1510 915.90H1558.08"/><path d="M1510 948.90H1558.08"/></g>
<!-- inner scroll arrows -->
<path d="M1634.300 734l5.200-5.600 5.200 5.600z" fill="#a3a3a3"/>
<path d="M1634 945l5.200 5.500 5.200-5.500z" fill="#505050"/>
</svg>


<div class="a" id="footer"></div>
<div class="t" style="left:34.75px;top:1127px;font-size:15px;color:#8a8a8a;letter-spacing:-0.276px;">UK-Overview</div>
<div class="a" id="vscroll"></div>
<div class="a" id="vthumb"></div>
<svg class="a" style="left:0;top:288px" width="1728" height="864" viewBox="0 288 1728 864">
<path d="M1711.700 302.400l5-5.500 5 5.500z" fill="#a3a3a3"/>
<path d="M1711.700 1137.500l5 5.500 5-5.500z" fill="#505050"/>
<path d="M1658 1126.200h12.300v14.300l-6.150-5-6.150 5z" fill="none" stroke="#5775c4" stroke-width="1.400"/>
</svg>

</body>
</html>
